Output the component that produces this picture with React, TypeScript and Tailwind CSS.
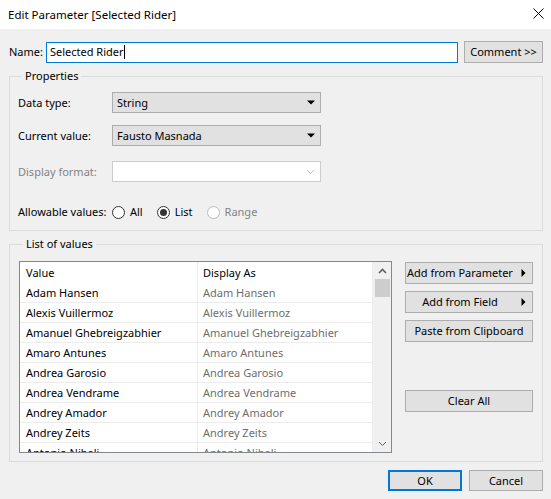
import React from "react";

function DownTri({ color = "#000" }: { color?: string }) {
  return (
    <svg width="8" height="5" viewBox="0 0 8 5">
      <path d="M0 0.5 L8 0.5 L4 4.5 Z" fill={color} />
    </svg>
  );
}

function RightTri() {
  return (
    <svg width="5" height="8" viewBox="0 0 5 8">
      <path d="M0.5 0 L4.5 4 L0.5 8 Z" fill="#000" />
    </svg>
  );
}

function Chevron({ up, color }: { up?: boolean; color: string }) {
  return (
    <svg width="9" height="6" viewBox="0 0 9 6">
      <polyline
        points={up ? "1,5 4.5,1.5 8,5" : "1,1 4.5,4.5 8,1"}
        fill="none"
        stroke={color}
        strokeWidth={up ? 1.6 : 1}
      />
    </svg>
  );
}

function Select({ value, disabled }: { value?: string; disabled?: boolean }) {
  return (
    <div
      className={
        disabled
          ? "w-[209px] h-[21px] bg-white border border-[#cccccc] flex items-center pl-[4px] pr-[5px]"
          : "w-[209px] h-[21px] bg-[#e1e1e1] border border-[#adadad] flex items-center pl-[4px] pr-[5px]"
      }
    >
      <span className="flex-1">{value}</span>
      {disabled ? <Chevron color="#bfbfbf" /> : <DownTri />}
    </div>
  );
}

function Radio({ checked, disabled, label }: { checked?: boolean; disabled?: boolean; label: string }) {
  return (
    <div className="flex items-center gap-[5px]">
      <div
        className={
          disabled
            ? "w-[13px] h-[13px] rounded-full border border-[#bcbcbc] bg-white"
            : "w-[13px] h-[13px] rounded-full border border-[#333333] bg-white flex items-center justify-center"
        }
      >
        {checked && <div className="w-[7px] h-[7px] rounded-full bg-[#333333]" />}
      </div>
      <span className={disabled ? "text-[#838383]" : ""}>{label}</span>
    </div>
  );
}

function Btn({ children, arrow, className = "" }: { children: React.ReactNode; arrow?: boolean; className?: string }) {
  return (
    <div
      className={
        "h-[22px] bg-[#e1e1e1] border border-[#adadad] flex items-center " + className
      }
    >
      <span className="flex-1 text-center whitespace-nowrap">{children}</span>
      {arrow && (
        <span className="w-[18px] flex items-center justify-center">
          <RightTri />
        </span>
      )}
    </div>
  );
}

const riders = [
  "Adam Hansen",
  "Alexis Vuillermoz",
  "Amanuel Ghebreigzabhier",
  "Amaro Antunes",
  "Andrea Garosio",
  "Andrea Vendrame",
  "Andrey Amador",
  "Andrey Zeits",
  "Antonio Nibali",
];

export default function App() {
  return (
    <div className="w-[551px] h-[499px] bg-[#f0f0f0] text-[11px] leading-[16px] text-black font-['Noto_Sans',sans-serif] flex flex-col overflow-hidden">
      {/* Title bar */}
      <div className="h-[29px] bg-white flex items-center pl-[8px] pr-[7px] shrink-0">
        <span className="flex-1 text-[11.5px]">Edit Parameter [Selected Rider]</span>
        <svg width="11" height="11" viewBox="0 0 11 11" className="mb-[2px]">
          <path d="M0.5 0.5 L10.5 10.5 M10.5 0.5 L0.5 10.5" stroke="#000" strokeWidth="1" />
        </svg>
      </div>

      <div className="flex flex-col pl-[9px] pr-[8px]">
        {/* Name row */}
        <div className="mt-[12px] flex items-center h-[22px]">
          <span className="w-[37px]">Name:</span>
          <div className="w-[412px] h-[21px] border border-[#0078d7] bg-white flex items-center pl-[3px]">
            <span>Selected Rider</span>
            <span className="w-px h-[14px] bg-black" />
          </div>
          <Btn className="ml-[6px] w-[79px]">Comment &gt;&gt;</Btn>
        </div>

        {/* Properties */}
        <fieldset className="mt-[5px] border border-[#dcdcdc] pl-[8px] pb-[10px]">
          <legend className="ml-[4px] px-[3px] leading-[16px]">Properties</legend>
          <div className="mt-[8px] flex items-center">
            <span className="w-[94px]">Data type:</span>
            <Select value="String" />
          </div>
          <div className="mt-[12px] flex items-center">
            <span className="w-[94px]">Current value:</span>
            <Select value="Fausto Masnada" />
          </div>
          <div className="mt-[15px] flex items-center">
            <span className="w-[94px] text-[#838383]">Display format:</span>
            <Select disabled />
          </div>
          <div className="mt-[22px] flex items-center h-[16px]">
            <span className="w-[94px]">Allowable values:</span>
            <div className="flex items-center gap-[14px]">
              <Radio label="All" />
              <Radio label="List" checked />
              <Radio label="Range" disabled />
            </div>
          </div>
        </fieldset>

        {/* List of values */}
        <fieldset className="mt-[5px] border border-[#dcdcdc] pl-[9px] pr-[9px] pb-[8px]">
          <legend className="ml-[4px] px-[3px] leading-[16px]">List of values</legend>
          <div className="mt-[9px] flex">
            <div className="w-[373px] h-[192px] border border-[#828790] bg-white flex overflow-hidden">
              <div className="w-[353px] border-r border-[#ececec] flex flex-col">
                <div className="h-[21px] shrink-0 flex">
                  <div className="w-[178px] border-r border-[#ececec] pl-[6px] flex items-center">Value</div>
                  <div className="flex-1 pl-[5px] flex items-center">Display As</div>
                </div>
                {riders.map((r) => (
                  <div key={r} className="h-[20px] shrink-0 flex border-b border-[#ececec]">
                    <div className="w-[178px] border-r border-[#ececec] pl-[6px] flex items-center">{r}</div>
                    <div className="flex-1 pl-[5px] flex items-center text-[#6e6e6e]">{r}</div>
                  </div>
                ))}
              </div>
              <div className="flex-1 bg-[#f0f0f0] flex flex-col items-center">
                <div className="h-[17px] flex items-center justify-center">
                  <Chevron up color="#606060" />
                </div>
                <div className="w-[15px] h-[18px] bg-[#cdcdcd]" />
                <div className="flex-1" />
                <div className="h-[17px] flex items-center justify-center">
                  <Chevron color="#606060" />
                </div>
              </div>
            </div>
            <div className="ml-[13px] w-[128px] flex flex-col pt-[1px]">
              <Btn arrow>Add from Parameter</Btn>
              <Btn arrow className="mt-[7px]">Add from Field</Btn>
              <Btn className="mt-[7px]">Paste from Clipboard</Btn>
              <Btn className="mt-[48px]">Clear All</Btn>
            </div>
          </div>
        </fieldset>

        {/* Bottom buttons */}
        <div className="mt-[8px] flex justify-end gap-[7px]">
          <div className="w-[74px] h-[21px] bg-[#e1e1e1] border-2 border-[#0078d7] flex items-center justify-center">OK</div>
          <div className="w-[74px] h-[21px] bg-[#e1e1e1] border border-[#adadad] flex items-center justify-center">Cancel</div>
        </div>
      </div>
    </div>
  );
}
